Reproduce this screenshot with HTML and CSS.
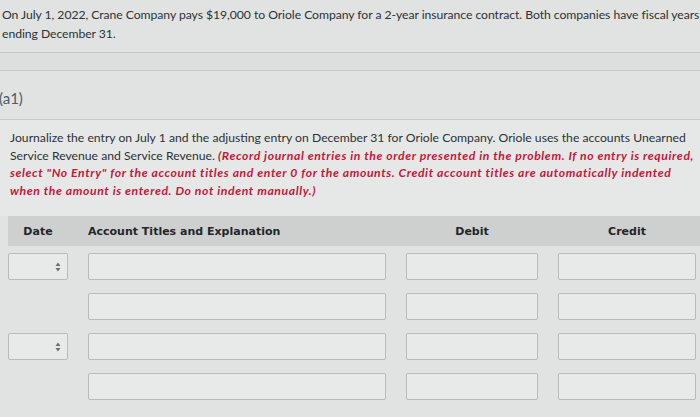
FILE: index.html
```html
<!DOCTYPE html>
<html lang="en">
  <head>
    <meta charset="UTF-8" />
    <meta name="viewport" content="width=device-width, initial-scale=1.0" />
    <title>Journal Entry</title>
    <link rel="stylesheet" href="styles.css">
  </head>
  <body>
    <div class="question">
      <p class="question-text">
        On July 1, 2022, Crane Company pays $19,000 to Oriole Company for a 2-year insurance contract. Both companies have fiscal years<br />
        ending December 31.
      </p>
      <div class="question-band"></div>
      <div class="part-label">(a1)</div>
      <div class="instructions">
        Journalize the entry on July 1 and the adjusting entry on December 31 for Oriole Company. Oriole uses the accounts Unearned<br />
        Service Revenue and Service Revenue. <span class="instructions-note">(Record journal entries in the order presented in the problem. If no entry is required,<br />
        select "No Entry" for the account titles and enter 0 for the amounts. Credit account titles are automatically indented<br />
        when the amount is entered. Do not indent manually.)</span>
      </div>
      <div class="journal">
        <div class="journal-header">
          <div class="journal-col journal-col-center">Date</div>
          <div class="journal-col">Account Titles and Explanation</div>
          <div class="journal-col journal-col-center">Debit</div>
          <div class="journal-col journal-col-center">Credit</div>
        </div>
        <div class="journal-row">
          <div class="journal-select">
            <svg width="6" height="10" viewBox="0 0 6 10"><path d="M3 0.5 L5.5 4 H0.5 Z M3 9.5 L5.5 6 H0.5 Z" fill="#6b6d6e" /></svg>
          </div>
          <div class="journal-input"></div>
          <div class="journal-input"></div>
          <div class="journal-input"></div>
        </div>
        <div class="journal-row">
          <div></div>
          <div class="journal-input"></div>
          <div class="journal-input"></div>
          <div class="journal-input"></div>
        </div>
        <div class="journal-row">
          <div class="journal-select">
            <svg width="6" height="10" viewBox="0 0 6 10"><path d="M3 0.5 L5.5 4 H0.5 Z M3 9.5 L5.5 6 H0.5 Z" fill="#6b6d6e" /></svg>
          </div>
          <div class="journal-input"></div>
          <div class="journal-input"></div>
          <div class="journal-input"></div>
        </div>
        <div class="journal-row">
          <div></div>
          <div class="journal-input"></div>
          <div class="journal-input"></div>
          <div class="journal-input"></div>
        </div>
      </div>
    </div>
  </body>
</html>
```

FILE: styles.css
```css
body {
  margin: 0;
  overflow: hidden;
  background-color: #e1e3e2;
  font-family: Lato, "Open Sans", sans-serif;
  color: #2c3236;
}
.question {
  width: 700px;
  height: 417px;
  overflow: hidden;
}
.question-text {
  margin: 0;
  padding: 5px 0 0 2px;
  font-size: 12.2px;
  letter-spacing: -0.05px;
  line-height: 19px;
  white-space: nowrap;
}
.question-band {
  height: 17px;
  margin-top: 9px;
  border-top: 1px solid #c6c9c8;
  border-bottom: 1px solid #c6c9c8;
  background-color: #dcdfde;
}
.part-label {
  height: 31px;
  padding-top: 17px;
  line-height: 20px;
  margin-left: -1px;
  font-size: 15px;
  color: #4c5b6a;
  border-bottom: 1px solid #c6c9c8;
}
.instructions {
  padding: 9px 0 0 10px;
  height: 87px;
  font-size: 12.2px;
  line-height: 17.5px;
  white-space: nowrap;
  background-color: #e6e8e7;
}
.instructions-note {
  color: #c4183a;
  font-weight: bold;
  font-style: italic;
  letter-spacing: 0.6px;
}
.journal {
  padding-left: 8px;
}
.journal-header {
  display: grid;
  grid-template-columns: 60px 298px 132px 138px;
  column-gap: 20px;
  height: 30px;
  align-items: center;
  background-color: #cdd0cf;
  font-family: "DejaVu Sans", Verdana, sans-serif;
  font-weight: bold;
  font-size: 11px;
  color: #232628;
}
.journal-col-center {
  text-align: center;
}
.journal-row {
  display: grid;
  grid-template-columns: 60px 298px 132px 138px;
  column-gap: 20px;
  height: 27px;
  margin-top: 7px;
}
.journal-row + .journal-row {
  margin-top: 13px;
}
.journal-input,
.journal-select {
  box-sizing: border-box;
  border: 1px solid #b9bcbb;
  border-radius: 2px;
  background-color: #e8eae9;
}
.journal-select {
  display: flex;
  justify-content: flex-end;
  align-items: center;
  padding-right: 6px;
}
```
